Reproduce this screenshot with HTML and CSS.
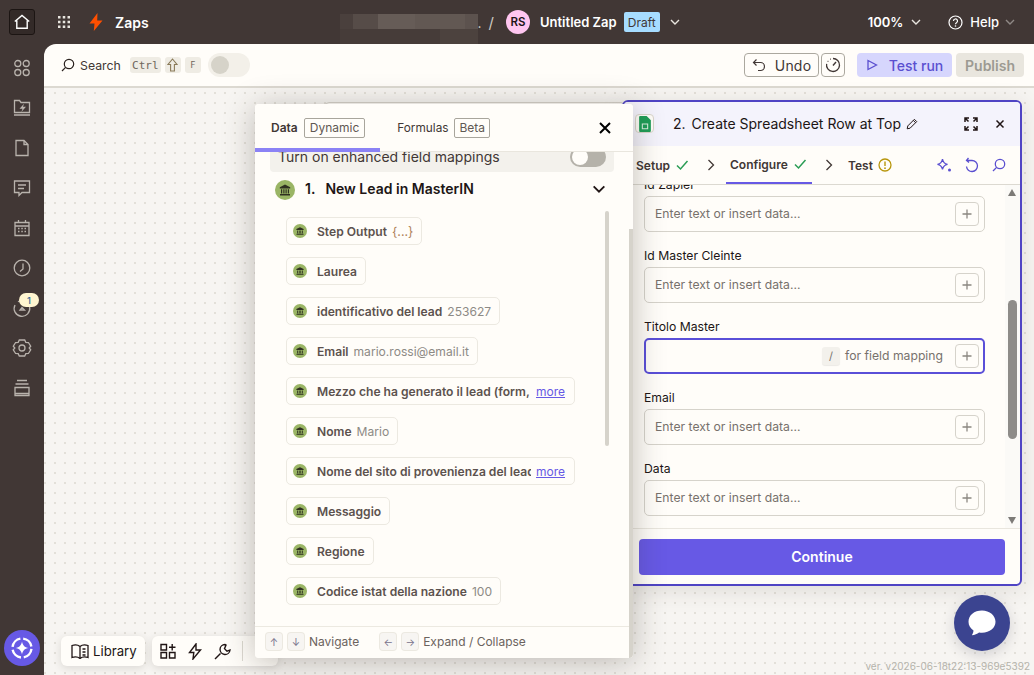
FILE: index.html
```html
<!DOCTYPE html>
<html lang="en">
<head>
<meta charset="utf-8">
<title>Untitled Zap</title>
<link rel="stylesheet" href="styles.css">
</head>
<body>
<svg class="defs" width="0" height="0" aria-hidden="true">
  <symbol id="bank" viewBox="0 0 20 20">
    <circle cx="10" cy="10" r="10" fill="#9ab565"/>
    <path d="M10 4.500 4.800 7.300v1.100h10.400V7.300z" fill="#2f3020"/>
    <path d="M6 9.200h1.200v4.200H6zM8.300 9.200h1.200v4.200H8.300zM10.500 9.200h1.200v4.200h-1.200zM12.800 9.200H14v4.200h-1.200z" fill="#2f3020"/>
    <path d="M5 14h10v1.400H5z" fill="#2f3020"/>
  </symbol>
  <symbol id="plus" viewBox="0 0 24 24"><path d="M12 6v12M6 12h12" stroke="#8b8780" stroke-width="1.7" fill="none"/></symbol>
  <symbol id="chev" viewBox="0 0 12 12"><path d="M2 4l4 4 4-4" stroke="currentColor" stroke-width="1.4" fill="none"/></symbol>
  <symbol id="next" viewBox="0 0 12 14"><path d="M3.500 2l5 5-5 5" stroke="#413735" stroke-width="1.300" fill="none"/></symbol>
  <symbol id="tick" viewBox="0 0 14 12"><path d="M2 6.500l3.500 3.500L12.500 2" stroke="#2a9d55" stroke-width="1.500" fill="none"/></symbol>
</svg>

<div class="app">
  <header class="topbar">
    <a class="home"><svg width="16" height="16" viewBox="0 0 16 16"><path d="M.8 7.500 8 1.500l7.200 6M2.800 6.500v7.800h10.400V6.500" fill="none" stroke="#fff" stroke-width="1.400"/></svg></a>
    <svg class="apps" width="14" height="14" viewBox="0 0 14 14" fill="#e8e5df"><path d="M1 1h2.500v2.500H1zM5.750 1h2.500v2.500h-2.500zM10.500 1H13v2.500h-2.500zM1 5.750h2.500v2.500H1zM5.750 5.750h2.500v2.500h-2.500zM10.500 5.750H13v2.500h-2.500zM1 10.500h2.500V13H1zM5.750 10.500h2.500V13h-2.500zM10.500 10.500H13V13h-2.500z"/></svg>
    <svg class="bolt" width="14" height="18" viewBox="0 0 14 18"><path d="M8.500 0 .5 10.400h5L4.800 18l8.700-10.600H8.200z" fill="#ff4f00"/></svg>
    <span class="product">Zaps</span>
    <div class="crumbs">
      <span class="blur"></span>
      <span class="crumb-dot">.</span>
      <span class="slash">/</span>
      <span class="avatar">RS</span>
      <span class="zapname">Untitled Zap</span>
      <span class="draft">Draft</span>
      <svg class="chev-w" width="12" height="12"><use href="#chev"/></svg>
    </div>
    <div class="top-right">
      <span class="zoomv">100%</span>
      <svg class="chev-w chev-z" width="12" height="12"><use href="#chev"/></svg>
      <svg class="helpicon" width="15" height="15" viewBox="0 0 15 15"><circle cx="7.500" cy="7.500" r="6.500" fill="none" stroke="#fff" stroke-width="1.200"/><path d="M5.500 6a2 2 0 1 1 3 1.700c-.7.4-1 .8-1 1.500" fill="none" stroke="#fff" stroke-width="1.200"/><circle cx="7.500" cy="11" r=".8" fill="#fff"/></svg>
      <span class="help">Help</span>
      <svg class="chev-d" width="12" height="12"><use href="#chev"/></svg>
    </div>
  </header>

  <div class="lower">
    <nav class="rail">
      <div class="rail-icons">
        <svg class="ri" viewBox="0 0 20 20"><circle cx="5.800" cy="5.500" r="3"/><circle cx="14.200" cy="5.500" r="3"/><circle cx="5.800" cy="14.500" r="3"/><circle cx="14.200" cy="14.500" r="3"/></svg>
        <svg class="ri" viewBox="0 0 20 20"><path d="M2.500 14.500V2.500h5l1.500 2h8.500v10zM2 17h16"/><path d="M12 5.800 7.500 10.800h3L9.300 14 14 8.800h-3z" fill="#b9b3ad" stroke="none"/></svg>
        <svg class="ri" viewBox="0 0 20 20"><path d="M4 2.500h8l4 4v11H4zM12 2.500v4h4"/></svg>
        <svg class="ri" viewBox="0 0 20 20"><path d="M2.500 3h15v11.500H10l-3 3v-3H2.500zM6 7h8M6 10.500h6"/></svg>
        <svg class="ri" viewBox="0 0 20 20"><path d="M3 4.500h14v13H3zM3 8h14M6.500 2v3M13.500 2v3"/><path d="M6 10.500h1.500M9.300 10.500h1.500M12.500 10.500H14M6 13.500h1.500M9.300 13.500h1.500M12.500 13.500H14"/></svg>
        <svg class="ri" viewBox="0 0 20 20"><circle cx="10" cy="10" r="7.800"/><path d="M11 5.500V11l-3 2.500"/></svg>
        <div class="ri-wrap">
          <svg class="ri" viewBox="0 0 20 20"><path d="M3 7a7.800 7.800 0 1 0 3-3.200"/><path d="M10 9.500l2.500 2.500L8 12z"/></svg>
          <span class="rail-badge">1</span>
        </div>
        <svg class="ri" viewBox="0 0 20 20"><path d="M7.300 2h5.400l1.100 2.300 2.600.2 2.300 3.700-1.500 1.800 1.500 1.800-2.300 3.700-2.600.2-1.100 2.300H7.300l-1.100-2.300-2.600-.2-2.300-3.700L2.800 10 1.300 8.200l2.300-3.700 2.600-.2z"/><circle cx="10" cy="10" r="3"/></svg>
        <svg class="ri" viewBox="0 0 20 20"><path d="M5 2.500h10M3.500 6h13M3 9.500h14v8H3zM3 15.500h14"/></svg>
      </div>
      <a class="ai"><svg width="24" height="24" viewBox="0 0 24 24"><circle cx="12" cy="12" r="9.500" fill="none" stroke="#fff" stroke-width="2.400" stroke-dasharray="12 2.900" stroke-dashoffset="-1"/><path d="M12 5.500c.8 4 2.500 5.700 6.500 6.500-4 .8-5.700 2.500-6.500 6.500-.8-4-2.500-5.700-6.500-6.500 4-.8 5.700-2.500 6.500-6.500z" fill="#fff"/></svg></a>
    </nav>

    <main class="main">
      <div class="toolbar">
        <svg class="tool-search" width="14" height="14" viewBox="0 0 14 14"><circle cx="8" cy="6" r="4.700" fill="none" stroke="#2b2320" stroke-width="1.200"/><path d="M4.600 9.400 1 13" stroke="#2b2320" stroke-width="1.200"/></svg>
        <span class="search-label">Search</span>
        <kbd class="kb kb-ctrl">Ctrl</kbd>
        <span class="kb kb-shift"><svg width="11" height="15" viewBox="0 0 11 15"><path d="M5.500 1 1 6.500h2.600v6.500h3.800V6.500H10z" fill="none" stroke="#8a7a58" stroke-width="1.100"/></svg></span>
        <kbd class="kb kb-f">F</kbd>
        <span class="tool-toggle"><span class="tool-knob"></span></span>
        <div class="tool-right">
          <button class="btn-undo"><svg width="14" height="14" viewBox="0 0 14 14"><path d="M4.500 1.500 1.500 4.500l3 3M1.500 4.500h7a4 4 0 0 1 0 8H6" fill="none" stroke="#413735" stroke-width="1.200"/></svg>Undo</button>
          <button class="btn-timer"><svg width="16" height="16" viewBox="0 0 16 16"><path d="M8 1.500a6.500 6.500 0 1 1-6.400 5.400" fill="none" stroke="#413735" stroke-width="1.300"/><path d="M11 5 8 8.500" stroke="#413735" stroke-width="1.400"/><path d="M2.600 4.300h.8M5 2.200h.8" stroke="#413735" stroke-width="1.300"/></svg></button>
          <button class="btn-test"><svg width="12" height="12" viewBox="0 0 12 12"><path d="M2 1.500 10.500 6 2 10.500z" fill="none" stroke="#5a4fd0" stroke-width="1.300"/></svg>Test run</button>
          <button class="btn-publish">Publish</button>
        </div>
      </div>

      <section class="canvas">
        <div class="node"></div>
        <div class="dock dock-library">
          <svg width="18" height="16" viewBox="0 0 18 16"><path d="M1 2.500c3-1 6-.7 8 1 2-1.700 5-2 8-1v12c-3-1-6-.7-8 1-2-1.700-5-2-8-1zM9 3.500v12M11.500 6h3M11.500 9h3M11.500 12h3" fill="none" stroke="#201515" stroke-width="1.300"/></svg>
          <span>Library</span>
        </div>
        <div class="dock dock-tools">
          <svg width="16" height="16" viewBox="0 0 16 16"><path d="M1 1.500h5.500V7H1zM1 9.500h5.500V15H1zM9.500 9.500H15V15H9.500zM12.200 1v6.500M9 4.200h6.500" fill="none" stroke="#201515" stroke-width="1.400"/></svg>
          <svg width="14" height="17" viewBox="0 0 14 17"><path d="M8 1 1.500 9.500h4.300l-.8 6.500 7.500-9H8z" fill="none" stroke="#201515" stroke-width="1.400"/></svg>
          <svg width="17" height="17" viewBox="0 0 17 17"><path d="M6.500 10.500 1 16" stroke="#201515" stroke-width="1.400"/><path d="M11 1.500a5 5 0 1 0 5 5.500l-3 1.200-2.500-2.500L12 2z" fill="none" stroke="#201515" stroke-width="1.400"/></svg>
          <span class="dock-sep"></span>
        </div>

        <aside class="editor">
          <div class="ed-head">
            <span class="ed-app"><svg width="12" height="16" viewBox="0 0 11 15"><path d="M1 0h6l4 4v10a1 1 0 0 1-1 1H1a1 1 0 0 1-1-1V1a1 1 0 0 1 1-1z" fill="#1f9d57"/><path d="M2.500 7h6v5.500h-6z" fill="#d9f0e0"/><path d="M3.500 8h4v3.500h-4z" fill="#1f9d57"/></svg></span>
            <span class="ed-num">2.</span>
            <span class="ed-title">Create Spreadsheet Row at Top</span>
            <svg class="ed-pencil" width="12" height="12" viewBox="0 0 12 12"><path d="M1.200 10.800l.6-2.900L8.400 1.300l2.300 2.300-6.600 6.600zM7.300 2.400l2.300 2.300" fill="none" stroke="#201515" stroke-width="1"/></svg>
            <svg class="ed-expand" width="14" height="14" viewBox="0 0 14 14"><path d="M5 1H1v4M9 1h4v4M5 13H1V9M9 13h4V9M1 1l3.500 3.500M13 1 9.500 4.500M1 13l3.500-3.500M13 13 9.500 9.500" fill="none" stroke="#201515" stroke-width="1.500"/></svg>
            <svg class="ed-close" width="10" height="10" viewBox="0 0 10 10"><path d="M1.500 1.500l7 7M8.500 1.500l-7 7" stroke="#201515" stroke-width="1.500"/></svg>
          </div>
          <div class="ed-tabs">
            <span class="tab">Setup</span>
            <svg class="t-tick" width="14" height="12"><use href="#tick"/></svg>
            <svg class="t-next n1" width="12" height="14"><use href="#next"/></svg>
            <span class="tab tab-on">Configure<svg class="t-tick-in" width="14" height="12"><use href="#tick"/></svg></span>
            <svg class="t-next n2" width="12" height="14"><use href="#next"/></svg>
            <span class="tab">Test</span>
            <svg class="t-warn" width="14" height="14" viewBox="0 0 14 14"><circle cx="7" cy="7" r="6" fill="none" stroke="#b8960c" stroke-width="1.300"/><path d="M7 3.500v4.500" stroke="#b8960c" stroke-width="1.400"/><circle cx="7" cy="10.200" r=".9" fill="#b8960c"/></svg>
            <div class="t-tools">
              <svg width="16" height="16" viewBox="0 0 16 16"><path d="M6.500 2c.5 3.300 1.800 4.700 5 5.300-3.200.6-4.500 2-5 5.200-.5-3.200-1.800-4.600-5-5.200 3.200-.6 4.500-2 5-5.300z" fill="none" stroke="#5a4fd0" stroke-width="1.300"/><circle cx="13.500" cy="13" r="1.500" fill="#5a4fd0"/></svg>
              <svg width="14" height="16" viewBox="0 0 14 16"><path d="M3.500 1 1.500 3.500 4 5.500M2 3.500h5a5.500 5.500 0 1 1-5.500 6" fill="none" stroke="#5a4fd0" stroke-width="1.300"/></svg>
              <svg width="14" height="14" viewBox="0 0 14 14"><circle cx="8" cy="6" r="4.700" fill="none" stroke="#5a4fd0" stroke-width="1.300"/><path d="M4.600 9.400 1 13" stroke="#5a4fd0" stroke-width="1.300"/></svg>
            </div>
          </div>
          <div class="ed-body">
            <div class="fields">
              <div class="field"><label class="f-label">Id Zapier</label><div class="f-input"><span class="f-ph">Enter text or insert data...</span><span class="f-add"><svg width="18" height="18"><use href="#plus"/></svg></span></div></div>
              <div class="field"><label class="f-label">Id Master Cleinte</label><div class="f-input"><span class="f-ph">Enter text or insert data...</span><span class="f-add"><svg width="18" height="18"><use href="#plus"/></svg></span></div></div>
              <div class="field"><label class="f-label">Titolo Master</label><div class="f-input f-focus"><span class="f-slash">/</span><span class="f-hint">for field mapping</span><span class="f-add"><svg width="18" height="18"><use href="#plus"/></svg></span></div></div>
              <div class="field"><label class="f-label">Email</label><div class="f-input"><span class="f-ph">Enter text or insert data...</span><span class="f-add"><svg width="18" height="18"><use href="#plus"/></svg></span></div></div>
              <div class="field"><label class="f-label">Data</label><div class="f-input"><span class="f-ph">Enter text or insert data...</span><span class="f-add"><svg width="18" height="18"><use href="#plus"/></svg></span></div></div>
            </div>
            <div class="sbar">
              <span class="sb-up"></span>
              <span class="sb-thumb"></span>
              <span class="sb-down"></span>
            </div>
          </div>
          <div class="ed-foot"><button class="continue">Continue</button></div>
        </aside>

        <aside class="datap">
          <div class="dp-head">
            <span class="dp-tab dp-on">Data</span><span class="dp-tag">Dynamic</span>
            <span class="dp-tab dp-formulas">Formulas</span><span class="dp-tag">Beta</span>
            <svg class="dp-close" width="12" height="12" viewBox="0 0 12 12"><path d="M1 1l10 10M11 1 1 11" stroke="#000" stroke-width="2"/></svg>
            <span class="dp-under"></span>
          </div>
          <div class="dp-body">
            <div class="enh"><span class="enh-text">Turn on enhanced field mappings</span><span class="enh-toggle"><span class="enh-knob"></span></span></div>
            <div class="step">
              <svg class="step-ic" width="20" height="20"><use href="#bank"/></svg>
              <span class="step-n">1.</span>
              <span class="step-t">New Lead in MasterIN</span>
              <svg class="step-chev" width="16" height="16"><use href="#chev"/></svg>
            </div>
            <ul class="items">
              <li class="item"><svg width="14" height="14"><use href="#bank"/></svg><b class="i-name">Step Output</b><span class="i-obj">{...}</span></li>
              <li class="item"><svg width="14" height="14"><use href="#bank"/></svg><b class="i-name">Laurea</b></li>
              <li class="item"><svg width="14" height="14"><use href="#bank"/></svg><b class="i-name">identificativo del lead</b><span class="i-val">253627</span></li>
              <li class="item"><svg width="14" height="14"><use href="#bank"/></svg><b class="i-name">Email</b><span class="i-val">mario.rossi@email.it</span></li>
              <li class="item"><svg width="14" height="14"><use href="#bank"/></svg><b class="i-name i-clip">Mezzo che ha generato il lead (form, landing page)</b><a class="i-more">more</a></li>
              <li class="item"><svg width="14" height="14"><use href="#bank"/></svg><b class="i-name">Nome</b><span class="i-val">Mario</span></li>
              <li class="item"><svg width="14" height="14"><use href="#bank"/></svg><b class="i-name i-clip">Nome del sito di provenienza del lead</b><a class="i-more">more</a></li>
              <li class="item"><svg width="14" height="14"><use href="#bank"/></svg><b class="i-name">Messaggio</b></li>
              <li class="item"><svg width="14" height="14"><use href="#bank"/></svg><b class="i-name">Regione</b></li>
              <li class="item"><svg width="14" height="14"><use href="#bank"/></svg><b class="i-name">Codice istat della nazione</b><span class="i-val">100</span></li>
            </ul>
            <span class="dp-thumb"></span>
          </div>
          <div class="dp-foot">
            <kbd class="fk">↑</kbd><kbd class="fk">↓</kbd><span class="fl">Navigate</span>
            <kbd class="fk fk-gap">←</kbd><kbd class="fk">→</kbd><span class="fl">Expand / Collapse</span>
          </div>
          <span class="dp-strip"></span>
        </aside>

        <a class="chat"><svg width="30" height="28" viewBox="0 0 30 28"><path d="M15 1.500C7.300 1.500 1.500 6.300 1.500 12.800c0 3.700 2 6.800 5 8.800-.1 1.700-.7 3.400-1.600 4.600 2.800-.2 5.300-1.200 7.200-2.700.9.200 1.900.2 2.900.2 7.700 0 13.500-4.800 13.500-10.900S22.700 1.500 15 1.500z" fill="#fff"/></svg></a>
        <span class="version">ver. v2026-06-18t22:13-969e5392</span>
      </section>
    </main>
  </div>
</div>
</body>
</html>
```

FILE: styles.css
```css
* { box-sizing: border-box; }
html, body { margin: 0; height: 100%; }
body { font-family: Inter, "Liberation Sans", sans-serif; color: #201515; background: #413735; overflow: hidden; }
.defs { position: absolute; }
button { font-family: inherit; cursor: pointer; }
ul { list-style: none; margin: 0; padding: 0; }
kbd { font-family: inherit; }

.app { width: 1034px; height: 675px; display: flex; flex-direction: column; }

/* top bar */
.topbar { height: 44px; flex: none; display: flex; align-items: center; padding-left: 9px; color: #fff; }
.home { width: 26px; height: 26px; border: 1px solid #1c1513; border-radius: 3px; background: #332a28; display: flex; align-items: center; justify-content: center; }
.apps { margin-left: 22px; }
.bolt { margin-left: 18px; }
.product { margin-left: 12px; font-size: 14px; font-weight: 600; }
.crumbs { margin-left: 191px; display: flex; align-items: center; height: 44px; }
.blur { width: 138px; height: 30px; margin-top: 14px; background:
  linear-gradient(to right, #4a403d 0 13px, #564c48 13px 38px, #665c57 38px 75px, #625853 75px 125px, #5c524e 125px 138px) top / 100% 15px no-repeat,
  linear-gradient(to right, #463c39 0 100px, #4c423e 100px 138px) bottom / 100% 15px no-repeat; }
.crumb-dot { font-size: 14px; color: #d8d3cc; width: 8px; }
.slash { font-size: 15px; color: #cfcac2; margin-left: 3px; }
.avatar { width: 24px; height: 24px; margin-left: 12px; border-radius: 50%; background: #ffc6f0; color: #201515; font-size: 11.500px; font-weight: 600; display: flex; align-items: center; justify-content: center; }
.zapname { margin-left: 10px; font-size: 13px; font-weight: 600; }
.draft { margin-left: 7px; height: 20px; width: 36px; background: #a6dcff; color: #413735; font-size: 12px; border-radius: 2px; display: flex; align-items: center; justify-content: center; }
.chev-w { color: #e8e5df; margin-left: 9px; }
.chev-z { margin-left: 7px; }
.top-right { margin-left: auto; display: flex; align-items: center; padding-right: 18px; }
.zoomv { font-size: 13px; font-weight: 600; }
.helpicon { margin-left: 26px; }
.help { margin-left: 7px; font-size: 13px; font-weight: 500; }
.chev-d { color: #8f8986; margin-left: 5px; }

.lower { flex: 1; display: flex; min-height: 0; }

/* rail */
.rail { width: 44px; flex: none; display: flex; flex-direction: column; align-items: center; position: relative; }
.rail-icons { display: flex; flex-direction: column; align-items: center; gap: 20px; padding-top: 14px; }
.ri { width: 20px; height: 20px; fill: none; stroke: #b9b3ad; stroke-width: 1.300; display: block; }
.ri-wrap { position: relative; }
.rail-badge { position: absolute; left: 7px; top: -5px; width: 20px; height: 14px; border-radius: 7px; background: #fff6d0; color: #3a6b96; font-size: 9.500px; font-weight: 500; display: flex; align-items: center; justify-content: center; }
.ai { width: 36px; height: 36px; border-radius: 50%; background: #6759e5; margin-top: auto; margin-bottom: 9px; display: flex; align-items: center; justify-content: center; }

/* main */
.main { flex: 1; min-width: 0; display: flex; flex-direction: column; background: #fffdf9; border-top-left-radius: 12px; overflow: hidden; }
.toolbar { height: 44px; flex: none; display: flex; align-items: center; padding-left: 17px; border-bottom: 2px solid #dcd9d1; }
.search-label { margin-left: 5px; font-size: 12.300px; color: #413735; }
.kb { height: 16px; border-radius: 3px; background: #efece4; color: #6e675c; display: flex; align-items: center; justify-content: center; font-family: "DejaVu Sans Mono", "Liberation Mono", monospace; font-size: 11px; }
.kb-ctrl { width: 31px; margin-left: 9px; }
.kb-shift { width: 16px; margin-left: 4px; }
.kb-f { width: 16px; margin-left: 4px; font-size: 8.500px; }
.tool-toggle { width: 42px; height: 24px; border-radius: 12px; background: #f3f0e9; margin-left: 7px; padding: 3px; }
.tool-knob { display: block; width: 18px; height: 18px; border-radius: 50%; background: #d6d3c9; }
.tool-right { margin-left: auto; display: flex; align-items: center; padding-right: 10px; }
.btn-undo { width: 75px; height: 24px; background: #fffdf9; border: 1px solid #aba89f; border-radius: 4px; color: #413735; font-size: 14px; font-weight: 400; letter-spacing: .2px; display: flex; align-items: center; justify-content: center; gap: 9px; padding: 0; }
.btn-timer { width: 24px; height: 24px; margin-left: 2px; background: #fffdf9; border: 1px solid #aba89f; border-radius: 4px; display: flex; align-items: center; justify-content: center; padding: 0; }
.btn-test { width: 95px; height: 24px; margin-left: 12px; background: #d6d6fd; border: 0; border-radius: 4px; color: #5a4fd0; font-size: 14px; font-weight: 500; display: flex; align-items: center; justify-content: center; gap: 11px; padding: 0; }
.btn-publish { width: 68px; height: 24px; margin-left: 4px; background: #e9e6de; border: 0; border-radius: 4px; color: #9c9a92; font-size: 14px; font-weight: 600; padding: 0; }

/* canvas */
.canvas { flex: 1; position: relative; background-color: #f7f5f2; background-image: radial-gradient(circle at center, #e3e0d9 .9px, transparent 1px); background-size: 10px 10px; background-position: 6px 0; }
.node { position: absolute; left: 281px; top: 14px; width: 300px; height: 40px; background: #fffdf9; border: 1px solid #d6d3cb; border-radius: 4px; }
.dock { position: absolute; top: 548px; height: 30px; background: #fffdf9; border-radius: 6px; box-shadow: 0 2px 8px rgba(50,40,30,.14); display: flex; align-items: center; }
.dock-library { left: 17px; width: 84px; padding-left: 10px; gap: 4px; font-size: 13.200px; color: #201515; }
.dock-tools { left: 108px; width: 126px; padding-left: 8px; gap: 12px; }
.dock-sep { width: 1px; height: 20px; background: #dcd9d1; margin-left: -1px; }

/* editor */
.editor { position: absolute; left: 578px; top: 12px; width: 400px; height: 486px; background: #fffdf9; border: 2px solid #4f44c4; border-radius: 6px; display: flex; flex-direction: column; overflow: hidden; box-shadow: 0 4px 24px rgba(50,40,30,.12); }
.ed-head { height: 44px; flex: none; background: #f4f3fc; display: flex; align-items: center; padding-bottom: 1px; }
.ed-app { width: 19px; height: 19px; margin-left: 11px; border: 1px solid #d9d6cc; border-radius: 4px; background: #fffdf9; display: flex; align-items: center; justify-content: center; }
.ed-num { margin-left: 19px; font-size: 14px; }
.ed-title { margin-left: 6px; font-size: 14px; white-space: nowrap; }
.ed-pencil { margin-left: 5px; }
.ed-expand { margin-left: 46px; }
.ed-close { margin-left: 17px; }
.ed-tabs { height: 39px; flex: none; display: flex; align-items: center; padding-left: 12px; border-bottom: 1px solid #dcd9d1; }
.tab { font-size: 12px; font-weight: 600; color: #413735; height: 38px; display: flex; align-items: center; }
.tab-on { position: relative; margin-left: 9px; padding: 0 0 0 4px; width: 86px; border-bottom: 2px solid #6759e5; }
.t-tick { margin-left: 5px; }
.t-tick-in { margin-left: 5px; }
.n1 { margin-left: 16px; }
.n2 { margin-left: 11px; }
.tab-on + .n2 + .tab { margin-left: 13px; }
.t-warn { margin-left: 5px; }
.t-tools { margin-left: auto; display: flex; align-items: center; gap: 13px; padding-right: 14px; }

.ed-body { flex: 1; min-height: 0; position: relative; overflow: hidden; }
.fields { padding-left: 20px; margin-top: -11px; display: flex; flex-direction: column; gap: 13px; }
.field { width: 341px; }
.f-label { display: block; height: 20px; line-height: 22px; font-size: 12.200px; margin-bottom: 2px; color: #201515; }
.f-input { height: 36px; border: 1px solid #d6d3cb; border-radius: 5px; display: flex; align-items: center; padding: 0 5px 0 10px; }
.f-ph { font-size: 12.200px; color: #77716c; margin-top: -2px; }
.f-add { width: 24px; height: 24px; margin-left: auto; flex: none; border: 1px solid #d6d3cb; border-radius: 4px; display: flex; align-items: center; justify-content: center; }
.f-focus { border: 2px solid #5a4fd8; padding: 0 4px 0 9px; }
.f-slash { margin-left: auto; width: 18px; height: 18px; border-radius: 3px; background: #f3f1ec; box-shadow: 0 1px 1px rgba(0,0,0,.08); color: #77716c; font-size: 11px; display: flex; align-items: center; justify-content: center; }
.f-hint { font-size: 12.200px; color: #77716c; margin: -2px 12px 0 5px; }
.f-focus .f-add { margin-left: 0; }
.sbar { position: absolute; right: 0; top: 0; bottom: 0; width: 15px; background: #fbfaf7; }
.sb-up, .sb-down { position: absolute; left: 3px; width: 0; height: 0; border-left: 4.500px solid transparent; border-right: 4.500px solid transparent; }
.sb-up { top: 4px; border-bottom: 7px solid #7c7a77; }
.sb-down { bottom: 4px; border-top: 7px solid #7c7a77; }
.sb-thumb { position: absolute; left: 3px; top: 115px; width: 9px; height: 139px; background: #8e8c89; border-radius: 5px; }
.ed-foot { height: 56px; flex: none; border-top: 1px solid #e9e6de; padding: 10px 15px; }
.continue { width: 100%; height: 36px; border: 0; border-radius: 4px; background: #6759e5; color: #fff; font-size: 14px; font-weight: 600; padding: 0 0 2px; }

/* data panel */
.datap { position: absolute; left: 211px; top: 16px; width: 378px; height: 554px; background: #fffdf9; border-radius: 4px; display: flex; flex-direction: column; overflow: hidden; z-index: 2; }
.canvas::after { content: ""; position: absolute; left: 211px; top: 16px; width: 378px; height: 554px; border-radius: 4px; box-shadow: 0 4px 32px rgba(50,40,30,.3); z-index: 1; pointer-events: none; }
.dp-head { height: 48px; flex: none; position: relative; z-index: 1; background: #fffdf9; display: flex; align-items: center; padding-left: 16px; border-bottom: 1px solid #e9e6de; }
.dp-tab { font-size: 12px; color: #413735; }
.dp-on { font-weight: 600; }
.dp-formulas { margin-left: 32px; font-size: 11.800px; }
.dp-tag { margin-left: 6px; height: 20px; padding: 0 5px; border: 1px solid #a8a59c; border-radius: 2px; font-size: 12px; color: #5f5853; display: flex; align-items: center; }
.dp-formulas + .dp-tag { padding: 0 4px; }
.dp-close { position: absolute; left: 344px; top: 18px; }
.dp-under { position: absolute; left: 0; bottom: -1px; width: 125px; height: 4px; background: #8b82f5; }
.dp-body { flex: 1; min-height: 0; position: relative; overflow: hidden; }
.enh { margin: -10px 0 0 15px; width: 344px; height: 30px; background: #f3f1ec; border-radius: 4px; display: flex; align-items: center; justify-content: space-between; padding: 0 8px; font-size: 14px; color: #413735; }
.enh-text { margin-top: -2px; }
.enh-toggle { width: 36px; height: 20px; border-radius: 10px; background: #b5b2aa; padding: 2px; }
.enh-knob { display: block; width: 16px; height: 16px; border-radius: 50%; background: #fffdf9; }
.step { height: 35px; display: flex; align-items: center; padding-left: 20px; }
.step-n { margin: -2px 0 0 10px; font-size: 14px; font-weight: 600; }
.step-t { margin: -2px 0 0 10px; font-size: 14px; font-weight: 600; }
.step-chev { margin: -2px 26px 0 auto; color: #201515; }
.items { padding: 10px 0 0 31px; display: flex; flex-direction: column; gap: 12px; align-items: flex-start; }
.item { height: 28px; display: flex; align-items: center; border: 1px solid #ece9e1; border-radius: 5px; padding: 0 8px 0 6px; font-size: 12.100px; white-space: nowrap; }
.item svg { flex: none; margin-top: -1px; }
.i-name { margin-left: 10px; font-weight: 600; color: #5c524e; }
.i-clip { display: block; width: 214px; overflow: hidden; }
.i-val { margin-left: 5px; color: #8d8a85; }
.i-obj { margin-left: 5px; color: #b0825a; font-size: 12.500px; }
.i-more { margin: 0 1px 0 5px; color: #6759e5; text-decoration: underline; font-size: 12px; }
.dp-thumb { position: absolute; left: 350px; top: 59px; width: 4px; height: 235px; background: #d6d3cb; border-radius: 2px; }
.dp-foot { height: 32px; flex: none; display: flex; align-items: center; padding: 0 0 2px 11px; border-top: 1px solid #ece9e1; }
.fk { width: 16px; height: 17px; margin-right: 6px; border-radius: 3px; background: #f7f5f2; box-shadow: 0 0 0 1px #ece9e1; color: #76708a; font-size: 10px; display: flex; align-items: center; justify-content: center; }
.fk-gap { margin-left: 21px; }
.fl { font-size: 12px; color: #6b635e; margin-left: -1px; }
.dp-strip { position: absolute; right: 0; top: 125px; bottom: 0; width: 4px; background: #d6d3cb; }

/* chat, version */
.chat { position: absolute; left: 910px; top: 507px; width: 56px; height: 56px; border-radius: 50%; background: #3b4490; box-shadow: 0 4px 14px rgba(40,40,60,.18); display: flex; align-items: center; justify-content: center; }
.version { position: absolute; right: 4px; bottom: 3px; font-size: 10px; color: #b5b3ab; }
```
